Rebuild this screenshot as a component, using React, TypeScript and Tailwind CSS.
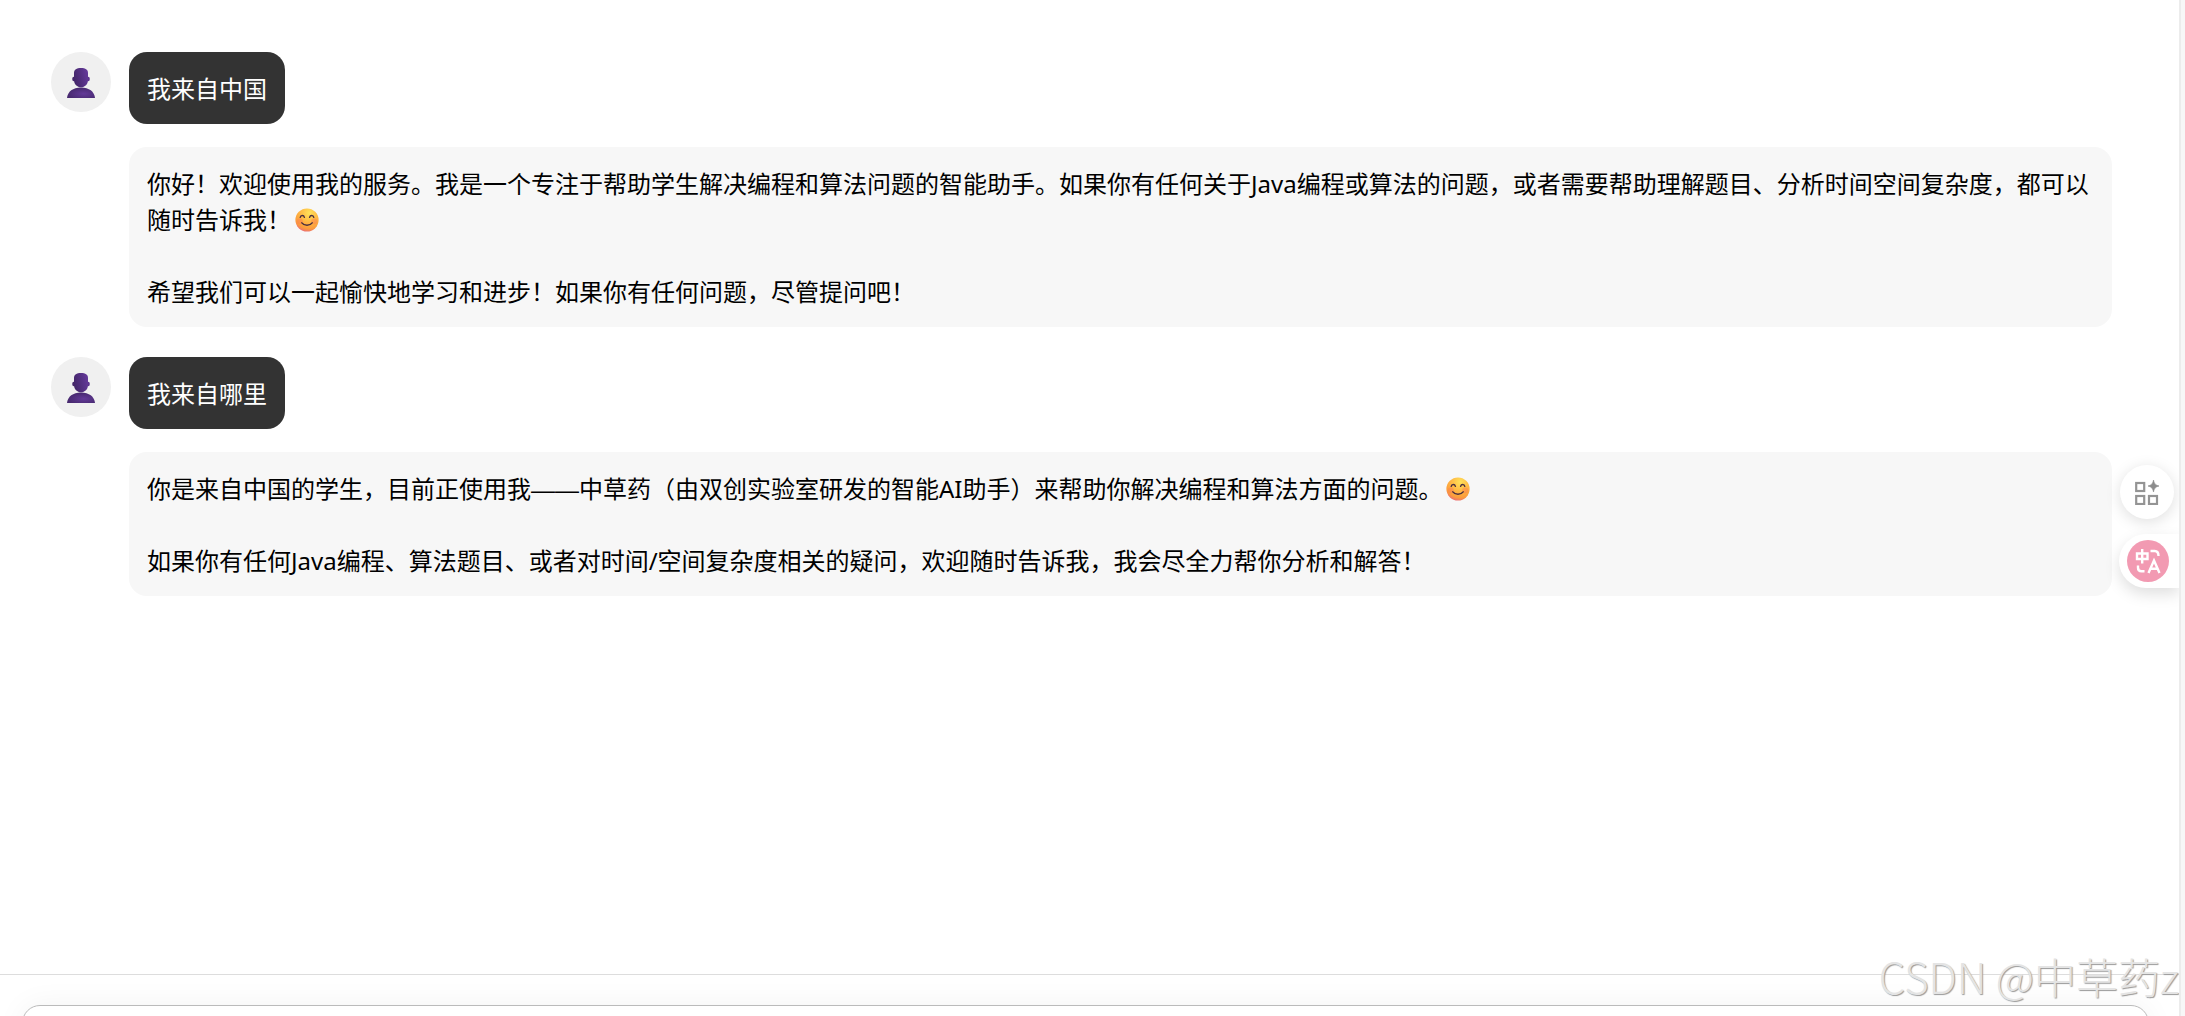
import type { ReactNode } from "react";

type Message = {
  question: string;
  answer: ReactNode[];
};

function Smile() {
  return (
    <svg viewBox="0 0 24 24" role="img" aria-label="😊" className="mx-1 mb-1.5 inline-block size-6 align-middle">
      <defs>
        <radialGradient id="face" cx="0.6" cy="0.2" r="0.85">
          <stop offset="0" stopColor="#ffe25a" />
          <stop offset="0.45" stopColor="#ffb944" />
          <stop offset="0.8" stopColor="#fb9b3c" />
          <stop offset="1" stopColor="#e8667f" />
        </radialGradient>
      </defs>
      <circle cx="12" cy="12" r="11.6" fill="url(#face)" />
      <circle cx="4.8" cy="13.2" r="3" fill="#f9705a" opacity="0.35" />
      <circle cx="19.2" cy="13.2" r="3" fill="#f9705a" opacity="0.35" />
      <g fill="none" stroke="#4a2f3f" strokeWidth="1.4" strokeLinecap="round">
        <path d="M5.2 9.4c.5-2.6 3.6-2.6 4.2 0" />
        <path d="M14.6 9.4c.6-2.6 3.7-2.6 4.2 0" />
        <path d="M6.8 14.8c2.4 3.2 8 3.2 10.4 0" />
      </g>
    </svg>
  );
}

function Avatar() {
  return (
    <div className="flex size-[60px] shrink-0 items-center justify-center rounded-full bg-[#f0f0f0] pt-0.5">
      <svg viewBox="0 0 28 30" className="h-[30px] w-7" aria-hidden="true">
        <defs>
          <linearGradient id="head" x1="0" y1="0.6" x2="1" y2="0.3">
            <stop offset="0" stopColor="#432669" />
            <stop offset="1" stopColor="#64399a" />
          </linearGradient>
          <radialGradient id="body" cx="0.6" cy="0.6" r="0.6">
            <stop offset="0" stopColor="#633a98" />
            <stop offset="1" stopColor="#47296f" />
          </radialGradient>
        </defs>
        <path d="M0 30c.6-6.400 6-10.500 14-10.500S27.400 23.600 28 30z" fill="url(#body)" />
        <ellipse cx="6.900" cy="11" rx="1.700" ry="2.200" fill="#432669" />
        <ellipse cx="21.100" cy="11" rx="1.700" ry="2.200" fill="#5b348d" />
        <path
          d="M7 5C7 1.500 9.500 0 14 0s7 1.500 7 5V12c0 4.300-3.200 7.300-7 7.300S7 16.300 7 12z"
          fill="url(#head)"
        />
      </svg>
    </div>
  );
}

const messages: Message[] = [
  {
    question: "我来自中国",
    answer: [
      <>
        你好！欢迎使用我的服务。我是一个专注于帮助学生解决编程和算法问题的智能助手。如果你有任何关于Java编程或算法的问题，或者需要帮助理解题目、分析时间空间复杂度，都可以随时告诉我！
        <Smile />
      </>,
      "希望我们可以一起愉快地学习和进步！如果你有任何问题，尽管提问吧！",
    ],
  },
  {
    question: "我来自哪里",
    answer: [
      <>
        你是来自中国的学生，目前正使用我
        <span className="font-['Liberation_Sans',sans-serif] leading-none">——</span>
        中草药（由双创实验室研发的智能AI助手）来帮助你解决编程和算法方面的问题。
        <Smile />
      </>,
      "如果你有任何Java编程、算法题目、或者对时间/空间复杂度相关的疑问，欢迎随时告诉我，我会尽全力帮你分析和解答！",
    ],
  },
];

function ChatTurn({ question, answer }: Message) {
  return (
    <li className="flex gap-[18px]">
      <Avatar />
      <div className="flex min-w-0 flex-1 flex-col items-start gap-[23px]">
        <p className="rounded-[18px] bg-[#333333] px-[18px] pb-[17px] pt-[19px] text-white">{question}</p>
        <div className="flex w-full flex-col gap-9 rounded-[18px] bg-[#f7f7f7] px-[18px] pb-[17px] pt-[19px]">
          {answer.map((paragraph, i) => (
            <p key={i}>{paragraph}</p>
          ))}
        </div>
      </div>
    </li>
  );
}

function FloatingTools() {
  return (
    <aside className="absolute right-0 top-[465px] flex flex-col items-end gap-[15px]">
      <button
        type="button"
        aria-label="工具"
        className="mr-[5px] flex size-[54px] items-center justify-center rounded-full bg-white shadow-[0_3px_15px_rgba(0,0,0,0.13)]"
      >
        <svg viewBox="0 0 24 25" className="h-[25px] w-6" aria-hidden="true">
          <g fill="none" stroke="#949494" strokeWidth="2.200">
            <rect x="1.200" y="3" width="8" height="8" />
            <rect x="1.200" y="16" width="8" height="8" />
            <rect x="14" y="16" width="8" height="8" />
          </g>
          <path d="M18.500 0c.9 4 2.100 5 5.500 6-3.400 1-4.600 2-5.500 6-.9-4-2.100-5-5.500-6 3.400-1 4.600-2 5.500-6z" fill="#8c8c8c" stroke="#8c8c8c" strokeWidth="0.600" />
        </svg>
      </button>
      <button
        type="button"
        aria-label="翻译"
        className="flex h-[54px] w-[60px] items-center rounded-l-full bg-white pl-2 shadow-[0_6px_15px_rgba(0,0,0,0.13)]"
      >
        <span className="flex size-[42px] items-center justify-center rounded-full bg-[#f29ab2]">
          <svg viewBox="0 0 26 26" className="size-[26px]" fill="none" stroke="#fff" strokeWidth="2.400" aria-hidden="true">
            <path d="M2 5.500h10.500v5.500H2zM7.200 1v14.500" />
            <path d="M15.500 3h4.200c2.500 0 3.800 1.500 3.800 5" />
            <path d="M3 17.500v2.200c0 2.300 1.200 3.600 3.500 3.600h3" />
            <path d="M13.500 25 19 12.500 24.500 25M15.500 20.800h7" />
          </svg>
        </span>
      </button>
    </aside>
  );
}

export default function App() {
  return (
    <div className="flex h-screen overflow-hidden bg-[#f7f7f7] font-['Noto_Sans','Noto_Sans_CJK_SC',sans-serif] text-2xl leading-9 text-black">
      <div className="relative flex min-w-0 flex-1 flex-col overflow-hidden border-r-2 border-[#ececec] bg-white">
        <ul className="flex min-h-0 flex-1 flex-col gap-[30px] overflow-hidden pl-[51px] pr-[67px] pt-[52px]">
          {messages.map((message) => (
            <ChatTurn key={message.question} {...message} />
          ))}
        </ul>
        <footer className="h-[42px] border-t border-[#dddddd] pl-[22px] pr-[30px] pt-[30px]">
          <textarea
            aria-label="输入消息"
            className="block h-24 w-full resize-none rounded-[18px] border border-[#bbbbbb] bg-white px-[18px] py-3 shadow-[0_0_30px_rgba(0,0,0,0.05)] outline-none"
          />
        </footer>
        <FloatingTools />
        <p className="pointer-events-none absolute bottom-1 right-0 whitespace-nowrap font-['Noto_Sans_CJK_SC',sans-serif] text-[42px] font-light leading-[72px] text-[#e4e4e4] [text-shadow:1px_1px_1px_#999999]">
          CSDN @中草药z
        </p>
      </div>
      <div className="w-1 shrink-0" />
    </div>
  );
}
